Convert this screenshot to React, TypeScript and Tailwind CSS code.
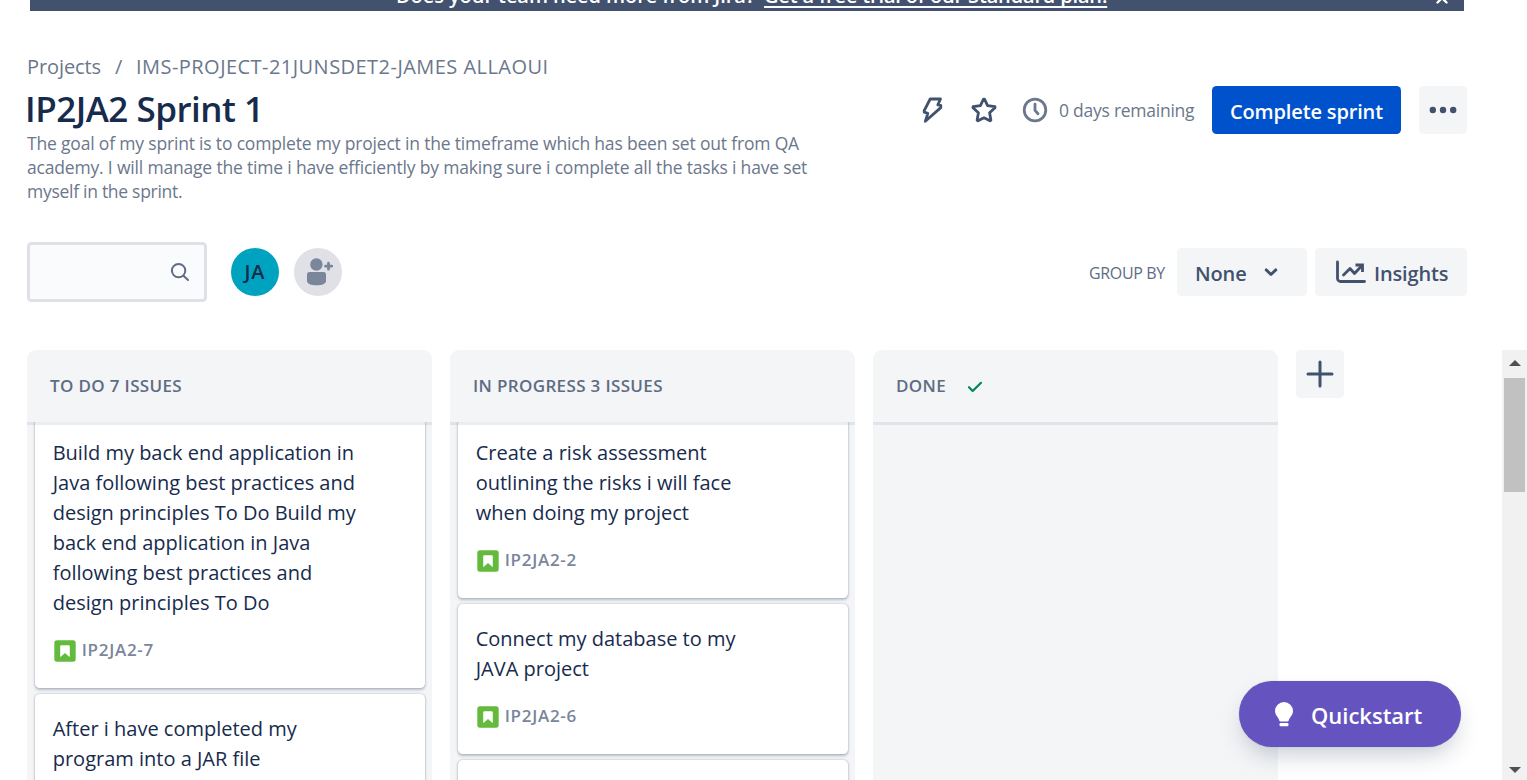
import type { ReactNode } from "react";

type Issue = { key: string; lines: string[] };

const todo: Issue[] = [
  {
    key: "IP2JA2-7",
    lines: [
      "Build my back end application in",
      "Java following best practices and",
      "design principles To Do Build my",
      "back end application in Java",
      "following best practices and",
      "design principles To Do",
    ],
  },
  { key: "", lines: ["After i have completed my", "program into a JAR file"] },
];

const inProgress: Issue[] = [
  {
    key: "IP2JA2-2",
    lines: ["Create a risk assessment", "outlining the risks i will face", "when doing my project"],
  },
  { key: "IP2JA2-6", lines: ["Connect my database to my", "JAVA project"] },
  { key: "", lines: [] },
];

function StoryIcon() {
  return (
    <svg width="22" height="22" viewBox="0 0 22 22" className="shrink-0">
      <rect x="0.3" y="0.3" width="21.4" height="21.4" rx="2.6" fill="#63BA3C" />
      <path d="M6.2 6.4a1.2 1.2 0 0 1 1.2-1.2h7.2a1.2 1.2 0 0 1 1.2 1.2v10.4h-.6L11 13l-4.2 3.8h-.6z" fill="#fff" />
    </svg>
  );
}

function Card({ issue }: { issue: Issue }) {
  return (
    <div className="min-h-20 shrink-0 rounded-[4.5px] bg-white pt-[19.5px] pr-4 pb-[26px] pl-[18.2px] shadow-[0_1.5px_3px_rgba(9,30,66,0.25),0_0_1.5px_rgba(9,30,66,0.31)]">
      {issue.lines.map((line) => (
        <p key={line} className="text-[20px] leading-[30px] whitespace-nowrap text-[#172B4D]">
          {line}
        </p>
      ))}
      {issue.key && (
        <div className="mt-5 flex h-6 items-center gap-[6px] pl-[1px]">
          <span className="mt-[2px]">
            <StoryIcon />
          </span>
          <span className="text-[17px] leading-6 font-semibold tracking-[0.7px] text-[#7A869A]">{issue.key}</span>
        </div>
      )}
    </div>
  );
}

function Column({ title, issues, done }: { title: string; issues: Issue[]; done?: boolean }) {
  return (
    <section className="flex h-full w-[405px] shrink-0 flex-col rounded-t-[9px] bg-[#F4F5F7]">
      <header className="flex h-[72px] shrink-0 items-center px-[23px]">
        <h2 className="text-[17px] font-semibold tracking-[0.35px] whitespace-nowrap text-[#5E6C84]">{title}</h2>
        {done && (
          <svg width="16" height="12" viewBox="0 0 16 12" className="mt-[2px] ml-[21px]" fill="none" stroke="#00875A" strokeWidth="2.2" strokeLinecap="round" strokeLinejoin="round">
            <path d="M2 6.2L5.7 10 14 1.8" />
          </svg>
        )}
      </header>
      <div className="relative min-h-0 flex-1 overflow-hidden">
        <div className="-mt-[3.5px] flex flex-col gap-[6px] px-[7.5px]">
          {issues.map((issue, i) => (
            <Card key={i} issue={issue} />
          ))}
        </div>
        <div className="absolute inset-x-0 top-0 h-[3px] bg-[rgba(9,30,66,0.08)]" />
      </div>
    </section>
  );
}

function GreyButton({ className, children }: { className: string; children: ReactNode }) {
  return (
    <button className={`flex h-12 shrink-0 items-center rounded-[4.5px] bg-[#F4F5F7] text-[20px] font-semibold text-[#42526E] ${className}`}>
      {children}
    </button>
  );
}

export default function App() {
  return (
    <div className="relative flex h-[780px] w-[1527px] flex-col overflow-hidden bg-white font-['Open_Sans',sans-serif]">
      <div className="ml-[30px] flex h-[11px] w-[1434px] shrink-0 items-end bg-[#42526E] text-[20px] leading-6 font-semibold whitespace-nowrap text-white">
        <span className="mb-[3px] ml-[366px] w-[368px] tracking-[-0.07px]">Does your team need more from Jira?</span>
        <a className="mb-[3px] tracking-[-0.16px] underline decoration-2 underline-offset-[3px] [text-decoration-skip-ink:none]">Get a free trial of our Standard plan.</a>
        <svg width="12" height="12" viewBox="0 0 12 12" className="mr-4 mb-[7px] ml-auto" stroke="#fff" strokeWidth="2.4" strokeLinecap="round">
          <path d="M1.5 1.5l9 9M10.5 1.5l-9 9" />
        </svg>
      </div>

      <nav className="mt-11 ml-[27px] flex h-6 shrink-0 text-[20px] leading-6 whitespace-nowrap text-[#6B778C]">
        <span className="w-[88px] tracking-[-0.1px]">Projects</span>
        <span className="w-[21px]">/</span>
        <span className="tracking-[0.46px]">IMS-PROJECT-21JUNSDET2-JAMES ALLAOUI</span>
      </nav>

      <div className="mt-[7px] ml-[27px] flex h-[120px] w-[1440px] shrink-0 items-start justify-between">
        <div className="whitespace-nowrap">
          <h1 className="-ml-[2px] h-[45px] text-[35px] leading-[46px] font-semibold tracking-[-0.5px] text-[#172B4D]">IP2JA2 Sprint 1</h1>
          <p className="text-[17.5px] leading-6 tracking-[-0.18px] text-[#6B778C]">
            The goal of my sprint is to complete my project in the timeframe which has been set out from QA
            <br />
            academy. I will manage the time i have efficiently by making sure i complete all the tasks i have set
            <br />
            <span className="tracking-[-0.28px]">myself in the sprint.</span>
          </p>
        </div>
        <div className="flex h-12 items-center">
          <svg width="24" height="30" viewBox="0 0 24 30" className="mr-[26px]" fill="none" stroke="#42526E" strokeWidth="2.8" strokeLinejoin="round">
            <path d="M10.2 4h10.300l-2.700 5.900 3 .4v2.300L5.300 26.300l2.500-7.900-3.600-1.200v-1.600z" />
          </svg>
          <svg width="28" height="30" viewBox="0 0 28 30" className="mr-[24px]" fill="none" stroke="#42526E" strokeWidth="2.8" strokeLinejoin="round">
            <path d="M13.500 4.200h1l3.100 6.500 7.400 1v1l-5.400 5.100 1.300 7.500-.9.500-6-3-6 3-.9-.500 1.300-7.500L3 12.700v-1l7.400-1z" />
          </svg>
          <svg width="26" height="26" viewBox="0 0 26 26" className="mr-[11px]" fill="none" stroke="#6B778C" strokeWidth="2.8" strokeLinecap="round" strokeLinejoin="round">
            <circle cx="13" cy="13" r="10.8" />
            <path d="M13 7.2v6.2l3 3.4" />
          </svg>
          <span className="w-[136px] text-[17.5px] tracking-[-0.25px] whitespace-nowrap text-[#6B778C]">0 days remaining</span>
          <button className="ml-[17px] flex h-12 w-[189px] items-center justify-center rounded-[4.5px] bg-[#0052CC] pt-[3px] text-[20px] font-semibold tracking-[-0.15px] text-white">
            Complete sprint
          </button>
          <GreyButton className="ml-[18px] w-12 justify-center">
            <svg width="30" height="8" viewBox="0 0 30 8" fill="#42526E">
              <circle cx="4.8" cy="4" r="3.2" />
              <circle cx="15" cy="4" r="3.2" />
              <circle cx="25.2" cy="4" r="3.2" />
            </svg>
          </GreyButton>
        </div>
      </div>

      <div className="mt-9 ml-[27px] flex h-[60px] w-[1440px] shrink-0 items-center">
        <div className="flex h-[60px] w-[180px] items-center justify-end rounded-[4.5px] border-[3px] border-[#DFE1E6] bg-[#FAFBFC] pr-[14px]">
          <svg width="20" height="20" viewBox="0 0 20 20" fill="none" stroke="#5E6C84" strokeWidth="2" strokeLinecap="round">
            <circle cx="8.6" cy="8.6" r="6.7" />
            <path d="M13.500 13.700l4.500 4.300" />
          </svg>
        </div>
        <div className="ml-6 flex size-12 items-center justify-center rounded-full bg-[#00A3BF] text-[20px] font-semibold tracking-[0.8px] text-[#172B4D]">JA</div>
        <div className="ml-[15px] flex size-12 items-center justify-center rounded-full bg-[#DFE1E6]">
          <svg width="48" height="48" viewBox="0 0 48 48" fill="#7A869A">
            <circle cx="22.4" cy="16.5" r="6.2" />
            <path d="M13 26.5a2.5 2.5 0 0 1 2.5-2.5h14A2.5 2.5 0 0 1 32 26.500v6.500c0 2.700-4 4.300-9.500 4.300S13 35.700 13 33z" />
            <path d="M34.500 15.200v6M31.500 18.200h6.200" stroke="#7A869A" strokeWidth="2.800" strokeLinecap="round" />
          </svg>
        </div>
        <span className="ml-auto w-[88px] pt-[1px] text-[16px] tracking-[-0.35px] whitespace-nowrap text-[#5E6C84]">GROUP BY</span>
        <GreyButton className="w-[130px] pl-[18px] tracking-[-0.15px]">
          <span className="pt-[3px]">None</span>
          <svg width="14" height="10" viewBox="0 0 14 10" className="ml-[17px]" fill="none" stroke="#42526E" strokeWidth="2.900" strokeLinecap="round" strokeLinejoin="round">
            <path d="M2.200 2.900L7 7.500l4.800-4.600" />
          </svg>
        </GreyButton>
        <GreyButton className="ml-2 w-[152px] pl-5 tracking-[-0.15px]">
          <svg width="32" height="24" viewBox="0 0 32 24" className="mr-[7px]" fill="none" stroke="#42526E" strokeWidth="2.800" strokeLinecap="round" strokeLinejoin="round">
            <path d="M2.500 2v16.500a3 3 0 0 0 3 3H29.500" />
            <path d="M8.500 15l6.500-6.500 4.500 5L26.500 6" />
            <path d="M20.500 5h7v7" strokeLinecap="butt" strokeLinejoin="miter" />
          </svg>
          <span className="pt-[3px]">Insights</span>
        </GreyButton>
      </div>

      <div className="mt-12 flex min-h-0 flex-1">
        <main className="ml-[27px] flex w-[1475px] gap-[18px]">
          <Column title="TO DO 7 ISSUES" issues={todo} />
          <Column title="IN PROGRESS 3 ISSUES" issues={inProgress} />
          <Column title="DONE" issues={[]} done />
          <GreyButton className="w-12 justify-center">
            <svg width="28" height="28" viewBox="0 0 28 28" stroke="#42526E" strokeWidth="3" strokeLinecap="round">
              <path d="M14 2v24M2 14h24" />
            </svg>
          </GreyButton>
        </main>
        <div className="flex w-[25px] shrink-0 flex-col items-center bg-[#F1F1F1]">
          <div className="flex h-7 items-center">
            <svg width="12" height="6" viewBox="0 0 12 6" fill="#505050" className="-mt-[2px]">
              <path d="M0 6L6 0l6 6z" />
            </svg>
          </div>
          <div className="h-[114px] w-[21px] bg-[#C1C1C1]" />
          <svg width="12" height="6" viewBox="0 0 12 6" fill="#505050" className="mt-auto mb-[7px]">
            <path d="M0 0h12L6 6z" />
          </svg>
        </div>
      </div>

      <button className="absolute top-[681px] left-[1239px] flex h-[66px] w-[222px] items-center rounded-full bg-[#6554C0] pl-[35px] text-[22px] font-semibold text-white shadow-[0_12px_24px_-6px_rgba(9,30,66,0.25),0_0_1px_rgba(9,30,66,0.31)]">
        <svg width="20" height="26" viewBox="0 0 20 26" fill="#fff">
          <path d="M10 1a9 9 0 0 0-9 9c0 3.600 2.600 5.700 3.800 8.200.5 1.100.6 2.300 1.600 2.300h7.200c1 0 1.100-1.200 1.600-2.300C16.400 15.700 19 13.600 19 10a9 9 0 0 0-9-9z" />
          <rect x="5.500" y="22" width="9" height="3.200" rx="1.200" />
        </svg>
        <span className="mt-[2px] ml-[17px]">Quickstart</span>
      </button>
    </div>
  );
}
